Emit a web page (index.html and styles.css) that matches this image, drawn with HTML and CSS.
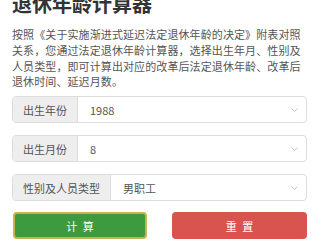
FILE: index.html
```html
<!DOCTYPE html>
<html lang="zh-CN">
<head>
    <meta charset="UTF-8" />
    <meta name="viewport" content="width=device-width, initial-scale=1.0" />
    <title>退休年龄计算器</title>
    <link rel="stylesheet" href="styles.css">
</head>
<body>
    <div class="page">
        <h1 class="page-title">退休年龄计算器</h1>
        <p class="intro">按照《关于实施渐进式延迟法定退休年龄的决定》附表对照关系，您通过法定退休年龄计算器，选择出生年月、性别及人员类型，即可计算出对应的改革后法定退休年龄、改革后退休时间、延迟月数。</p>

        <div class="input-group">
            <span class="addon">出生年份</span>
            <div class="select-box">
                <span class="value">1988</span>
                <svg class="caret" width="7" height="4" viewBox="0 0 7 4"><path d="M0.5 0.6 L3.5 3.4 L6.5 0.6" fill="none" stroke="#b5b5b5" stroke-width="0.8"/></svg>
            </div>
        </div>

        <div class="input-group">
            <span class="addon">出生月份</span>
            <div class="select-box">
                <span class="value">8</span>
                <svg class="caret" width="7" height="4" viewBox="0 0 7 4"><path d="M0.5 0.6 L3.5 3.4 L6.5 0.6" fill="none" stroke="#b5b5b5" stroke-width="0.8"/></svg>
            </div>
        </div>

        <div class="input-group">
            <span class="addon">性别及人员类型</span>
            <div class="select-box">
                <span class="value">男职工</span>
                <svg class="caret" width="7" height="4" viewBox="0 0 7 4"><path d="M0.5 0.6 L3.5 3.4 L6.5 0.6" fill="none" stroke="#b5b5b5" stroke-width="0.8"/></svg>
            </div>
        </div>

        <div class="actions">
            <button type="button" class="btn btn-calc">计 算</button>
            <button type="button" class="btn btn-reset">重 置</button>
        </div>
    </div>
</body>
</html>
```

FILE: styles.css
```css
body {
    font-family: "Noto Sans CJK SC", "Noto Sans", sans-serif;
    background-color: #fff;
    margin: 0;
    padding: 0;
    overflow: hidden;
}
.page {
    padding: 0 13px 0 12px;
}
.page-title {
    font-size: 20px;
    line-height: 28px;
    font-weight: bold;
    color: #333;
    margin: -10px 0 0 0;
}
.intro {
    font-size: 11px;
    line-height: 15.8px;
    color: #555;
    margin: 9px 0 6px 0;
    letter-spacing: 0.1px;
}
.input-group {
    display: flex;
    height: 27px;
    border: 1px solid #ddd;
    border-radius: 4px;
    box-sizing: border-box;
    margin-bottom: 12px;
    overflow: hidden;
}
.addon {
    display: flex;
    align-items: center;
    padding: 0 10px;
    background: #eee;
    border-right: 1px solid #ddd;
    color: #555;
    font-size: 11px;
}
.select-box {
    flex: 1;
    display: flex;
    align-items: center;
    justify-content: space-between;
    padding: 0 8px 0 12px;
    color: #555;
    font-size: 11px;
}
.actions {
    display: grid;
    grid-template-columns: 134px 135px;
    justify-content: space-between;
    margin-top: -1px;
    padding-left: 1px;
}
.btn {
    height: 27px;
    border: none;
    border-radius: 4px;
    color: #fff;
    font-family: inherit;
    font-size: 11px;
    padding: 0;
    word-spacing: 3px;
}
.btn-calc {
    background-color: #3e9a3e;
    border: 2px solid #c9b24c;
}
.btn-reset {
    background-color: #d9534f;
}
```
